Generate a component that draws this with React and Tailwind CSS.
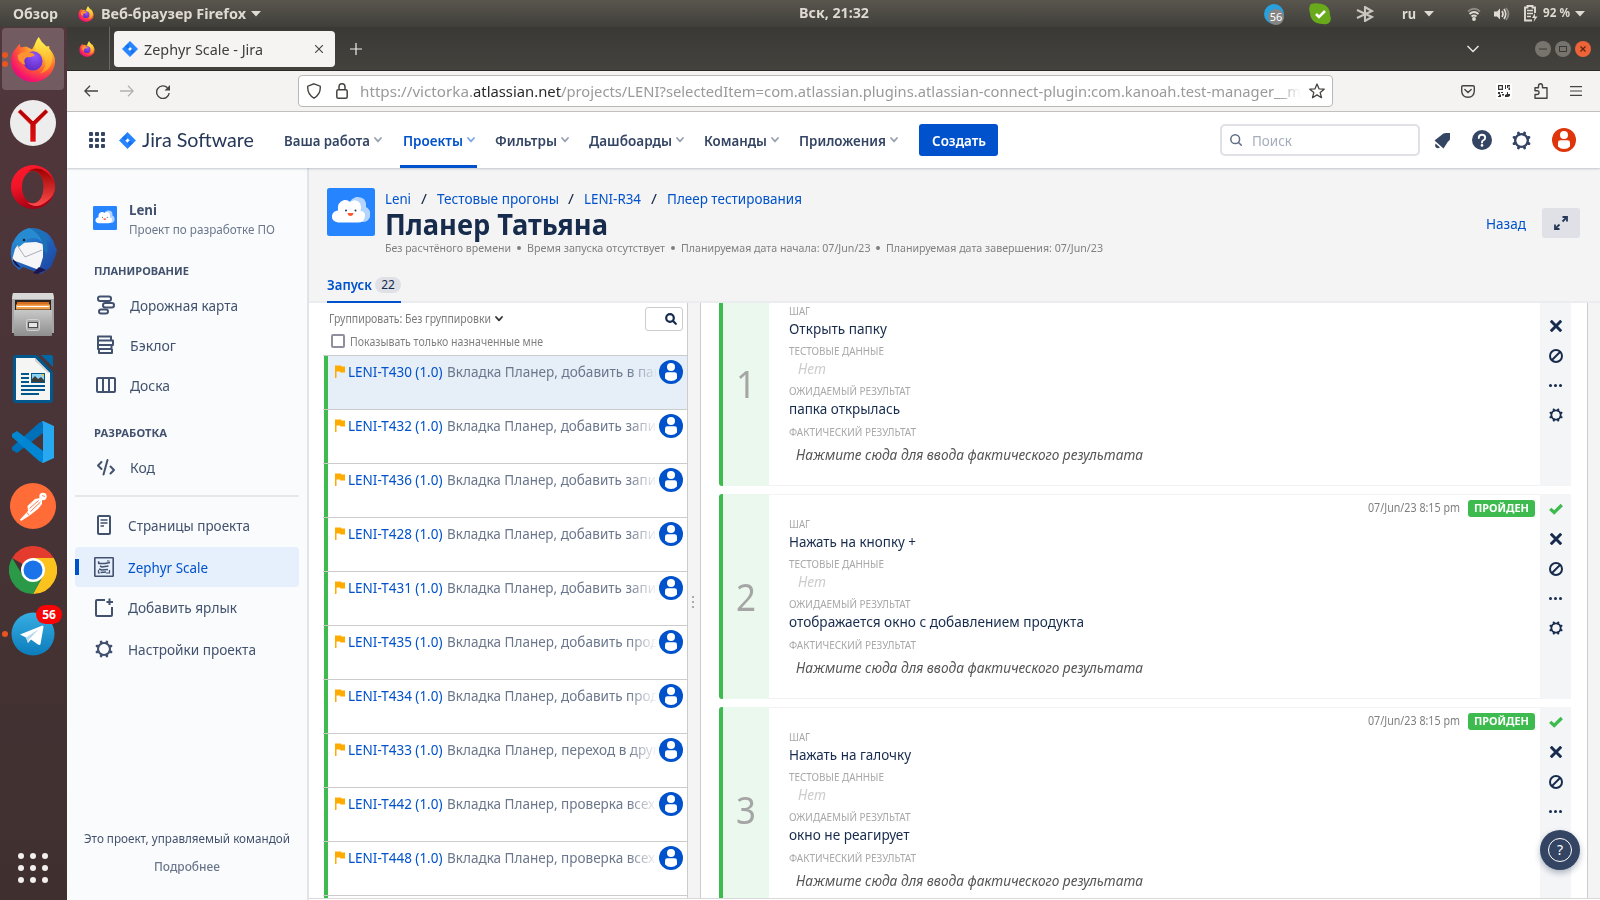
import { useLayoutEffect, useRef } from "react";

// Single line of text condensed or widened to the given width.
function T({ w, className = "", children }) {
  const ref = useRef(null);
  useLayoutEffect(() => {
    const el = ref.current;
    el.style.transform = "none";
    const range = document.createRange();
    range.selectNodeContents(el);
    const natural = range.getBoundingClientRect().width;
    el.style.transform = `scaleX(${w / natural})`;
  }, [w]);
  return (
    <span ref={ref} className={"inline-block shrink-0 origin-left whitespace-nowrap " + className} style={{ width: w }}>
      {children}
    </span>
  );
}

function Firefox({ className }) {
  return (
    <svg viewBox="0 0 48 48" className={className}>
      <defs>
        <radialGradient id="ffb" cx="0.75" cy="0.15" r="1">
          <stop offset="0" stopColor="#fff44f" />
          <stop offset="0.3" stopColor="#ffb32c" />
          <stop offset="0.6" stopColor="#ff5a36" />
          <stop offset="0.85" stopColor="#f5156c" />
          <stop offset="1" stopColor="#d80a86" />
        </radialGradient>
        <radialGradient id="ffp" cx="0.6" cy="0.25" r="0.8">
          <stop offset="0" stopColor="#9059ff" />
          <stop offset="0.6" stopColor="#7339d6" />
          <stop offset="1" stopColor="#592acb" />
        </radialGradient>
        <linearGradient id="ffy" x1="0" y1="0" x2="0" y2="1">
          <stop offset="0" stopColor="#fff44f" />
          <stop offset="1" stopColor="#ff9a1f" />
        </linearGradient>
      </defs>
      <path d="M6 13 L10 8 L11 12 L17 11 L23 14 L30 1 Q33 7 38 11 Q42 9 41 13 Q47 20 47 26 A23 22 0 0 1 1 26 Q1 18 6 13Z" fill="url(#ffb)" />
      <path d="M30 1 Q24 8 27 15 Q37 18 37 29 Q36 36 31 39 Q44 36 44 23 Q43 14 36 10 Q31 6 30 1Z" fill="url(#ffy)" opacity="0.9" />
      <circle cx="24" cy="26" r="10" fill="url(#ffp)" />
      <path d="M8 20 Q15 14 24 18 L26 20 Q22 23 18 22 Q13 24 16 30 Q8 28 8 20Z" fill="#ff9232" />
    </svg>
  );
}

function Yandex() {
  return (
    <svg viewBox="0 0 46 46" className="size-[46px]">
      <defs><linearGradient id="yr" x1="0" y1="0" x2="0" y2="1"><stop offset="0" stopColor="#b30000" /><stop offset="1" stopColor="#e01010" /></linearGradient></defs>
      <circle cx="23" cy="23" r="23" fill="#eeeded" />
      <path d="M7.500 12L20 24.500V42H26V24.500L38.500 12L35.500 9L23 21L10.500 9Z" fill="url(#yr)" stroke="#fff" strokeWidth="0.6" />
    </svg>
  );
}

function Opera() {
  return (
    <svg viewBox="0 0 44 44" className="size-11">
      <defs>
        <linearGradient id="opa" x1="0" y1="0" x2="0.3" y2="1"><stop offset="0" stopColor="#ff1b2d" /><stop offset="0.5" stopColor="#f01428" /><stop offset="1" stopColor="#a70014" /></linearGradient>
        <linearGradient id="opb" x1="0" y1="0" x2="0" y2="1"><stop offset="0" stopColor="#9c0000" /><stop offset="1" stopColor="#ff4b4b" /></linearGradient>
      </defs>
      <path fillRule="evenodd" d="M22 0A22 22 0 1 0 22 44A22 22 0 1 0 22 0ZM22 6C28 6 33 13 33 22S28 38 22 38S11 31 11 22S16 6 22 6Z" fill="url(#opa)" />
      <path d="M16 7Q22 2 30 4Q44 11 44 22T30 40Q22 43 16 37Q25 41 30 33Q35 22 30 11Q25 3 16 7Z" fill="url(#opb)" />
    </svg>
  );
}

function Thunderbird() {
  return (
    <svg viewBox="0 0 48 48" className="size-12">
      <defs><linearGradient id="tbb" x1="0" y1="0" x2="1" y2="1"><stop offset="0" stopColor="#2b9ae0" /><stop offset="0.5" stopColor="#2265bd" /><stop offset="1" stopColor="#1b3f9c" /></linearGradient></defs>
      <path d="M3 17Q0 30 4 37L10 43L14 40L32 47L42 40L46 30L48 23L46 19Q43 7 32 3Q27 0 18 2Q9 4 3 17Z" fill="url(#tbb)" />
      <path d="M10 16L27 15L34 17V30L30 43L9 35L3 33L6 22Z" fill="#f6f6f8" />
      <path d="M8 18L16 30L33 23" fill="none" stroke="#a9adb8" strokeWidth="1" />
      <path d="M6 15Q10 3 20 1Q35 4 36 18L29 12Q20 9 15 16L10 20Z" fill="#278bd2" />
      <path d="M20 1Q37 2 42 16L38 13Q39 20 38 27L34 22Q34 8 20 1Z" fill="#1d70b8" />
      <circle cx="15" cy="13" r="1.300" fill="#17202e" />
      <path d="M3 31Q5 39 12 41L7 35ZM30 40L37 43L28 47L24 46Z" fill="#1d1550" />
    </svg>
  );
}

function Files() {
  return (
    <svg viewBox="0 0 42 44" className="h-11 w-[42px]">
      <defs><linearGradient id="fl" x1="0" y1="0" x2="0" y2="1"><stop offset="0" stopColor="#c8c8c8" /><stop offset="1" stopColor="#8e8e8e" /></linearGradient></defs>
      <path d="M1 0H41L42 4V40H0V4Z" fill="#a5a5a5" />
      <path d="M1 0H41L42 6H0Z" fill="#d8d8d8" />
      <rect x="3" y="7" width="36" height="12" fill="#2a2220" />
      <rect x="5" y="9" width="32" height="3" fill="#d86f1f" />
      <rect x="4" y="11.500" width="34" height="5" fill="#f0a24f" />
      <rect x="5" y="13" width="32" height="1" fill="#fff" />
      <rect x="2" y="17" width="38" height="26" rx="1" fill="url(#fl)" />
      <rect x="14.500" y="26.500" width="13" height="11" rx="2" fill="#ababab" stroke="#d2d2d2" />
      <rect x="16.500" y="29.500" width="9" height="5" fill="#e6e6e6" stroke="#4c4c4c" />
    </svg>
  );
}

function Writer() {
  return (
    <svg viewBox="0 0 40 48" className="h-12 w-10">
      <path d="M3 0H24L40 17V45Q40 48 37 48H3Q0 48 0 45V3Q0 0 3 0Z" fill="#02588c" />
      <path d="M28 0H38Q40 0 40 2V12Z" fill="#0168a5" />
      <path d="M3 3H22L37 18V45H3Z" fill="#f5f5f4" />
      <path d="M22 3L37 18L35 18L22 6Z" fill="#d2d2d2" />
      <path d="M8 19H16M8 23H16M8 27H16M8 31H32M8 35H32M8 39H26" stroke="#02588c" strokeWidth="2" />
      <rect x="18.500" y="18.500" width="13" height="9" fill="#8cd2f5" stroke="#02588c" />
      <path d="M19 27V24L22 21L25 24L28 22L31 25V27Z" fill="#3c3c38" />
      <path d="M28 19H31V22Z" fill="#f0c830" />
    </svg>
  );
}

function VSCode() {
  return (
    <svg viewBox="0 0 42 42" className="size-[42px]">
      <path d="M31 0V12L5 32L0 29V26L27 2Z" fill="#0070b8" />
      <path d="M5 10L0 13V16L27 40L31 42V30Z" fill="#0086d2" />
      <path d="M31 0L42 5V37L31 42L30 41Q31 41 31 39V3Q31 1 30 1Z" fill="#28a8f0" />
    </svg>
  );
}

function Postman() {
  return (
    <svg viewBox="0 0 46 46" className="size-[46px]">
      <circle cx="23" cy="23" r="23" fill="#ff6c37" />
      <circle cx="33" cy="13.500" r="3.700" fill="#fff" />
      <path d="M30 15L25 16L17.500 23L18 28L10 36.500L11 38L19 33L28 26L32 21L32 17Z" fill="#fff" />
      <path d="M28.500 17.500L19.500 25.500M30.500 19L20.500 28.500M17 29.500L19 32.500" stroke="#ff6c37" strokeWidth="0.9" />
      <path d="M32 12.500L35 13.500" stroke="#ff6c37" strokeWidth="0.8" />
    </svg>
  );
}

function Chrome() {
  return (
    <svg viewBox="0 0 48 48" className="size-12">
      <path d="M24 24L3.200 12A24 24 0 0 1 44.800 12Z" fill="#e33b2e" />
      <path d="M24 12H44.800A24 24 0 0 1 24 48L34 30Z" fill="#fcc31e" />
      <path d="M24 48A24 24 0 0 1 3.200 12L14 30L24 36L34 30Z" fill="#2a9a48" />
      <circle cx="24" cy="24" r="12" fill="#fff" />
      <circle cx="24" cy="24" r="9.500" fill="#1a73e8" />
    </svg>
  );
}

function Telegram() {
  return (
    <svg viewBox="0 0 44 44" className="size-11">
      <defs><linearGradient id="tg" x1="0" y1="0" x2="0" y2="1"><stop offset="0" stopColor="#37aee2" /><stop offset="1" stopColor="#0c7cbc" /></linearGradient></defs>
      <circle cx="22" cy="22" r="21.500" fill="url(#tg)" />
      <path d="M9 22.500L31.500 13.500Q32.500 13.500 32.500 15L29.500 32Q29 33.500 27 32.500L20 27.500L17 31L15 25.500Z" fill="#fff" />
      <path d="M15 25.500L28 17L18 27.500L17 31Z" fill="#b8d9ee" />
    </svg>
  );
}

function Tri() {
  return <svg viewBox="0 0 10 6" className="h-[6px] w-[10px] shrink-0"><path d="M0 0H10L5 5.500Z" fill="#dfdbd2" /></svg>;
}

function JiraMark({ className }) {
  return (
    <svg viewBox="0 0 24 24" className={className}>
      <path fillRule="evenodd" d="M12 0.500L23.500 12L12 23.500L0.500 12ZM12 8.500L8.500 12L12 15.500L15.500 12Z" fill="#2684ff" strokeLinejoin="round" stroke="#2684ff" strokeWidth="0.800" />
      <path d="M12 3Q8 7 12 9L9 12L4 8ZM12 21Q16 17 12 15L15 12L20 16Z" fill="#0b65e3" opacity="0.550" />
    </svg>
  );
}

function Gear({ className, sw = 2.8 }) {
  return (
    <svg viewBox="0 0 24 24" className={className} fill="none" stroke="currentColor">
      <circle cx="12" cy="12" r="8" strokeWidth={sw} />
      {[22.5, 67.5, 112.5, 157.5, 202.5, 247.5, 292.5, 337.5].map((a) => (
        <path key={a} d="M12 1.800V3.500" strokeWidth="3.600" strokeLinecap="round" transform={`rotate(${a} 12 12)`} />
      ))}
    </svg>
  );
}

function Cloud({ className }) {
  return (
    <svg viewBox="0 0 48 48" className={className}>
      <rect width="48" height="48" rx="2.500" fill="#2684ff" />
      <path d="M20 34Q16 28 22 22Q20 12 29 9Q40 8 39 19Q44 21 43 29Q41 34 36 34Z" fill="#b3d4ff" />
      <path d="M11 34.500Q4 33 5 27.500Q6 23 11 22.500Q10 14 17 12Q21 11.500 23 14Q29 10 33 15Q35 19 33.500 23Q38.500 23 38 28.500Q37 34.500 31 34.500Z" fill="#fff" />
      <circle cx="19" cy="22.500" r="1" fill="#253858" /><circle cx="28.500" cy="22.500" r="1" fill="#253858" />
      <path d="M20.500 25H26.500Q26 28 23.500 28T20.500 25Z" fill="#ff5630" />
    </svg>
  );
}

function Person({ className }) {
  return (
    <svg viewBox="0 0 24 24" className={className}>
      <circle cx="12" cy="12" r="12" fill="currentColor" />
      <circle cx="12" cy="7" r="4" fill="#fff" />
      <path d="M6 14.500Q6 12.300 8.500 12.300H15.500Q18 12.300 18 14.500V18.500Q15.500 21 12 21T6 18.500Z" fill="#fff" />
    </svg>
  );
}

function Chev({ className }) {
  return <svg viewBox="0 0 8 6" className={"h-[6px] w-[8px] shrink-0 " + className} fill="none" stroke="currentColor" strokeWidth="1.800" strokeLinecap="round" strokeLinejoin="round"><path d="M1 1L4 4.300L7 1" /></svg>;
}

function TopBar() {
  return (
    <div className="flex h-[27px] items-center bg-gradient-to-b from-[#59564e] to-[#403f3a] pl-[13px] text-[15px] font-bold text-[#dfdbd2]">
      <T w={45} className="mt-px text-[14px]">Обзор</T>
      <Firefox className="ml-[20px] size-[16px]" />
      <T w={145} className="mt-px ml-[7px] text-[14px]">Веб-браузер Firefox</T>
      <span className="ml-[5px]"><Tri /></span>
      <T w={70} className="ml-[538px] text-[14px]">Вск, 21:32</T>
      <div className="relative ml-[395px] size-[20px] shrink-0 rounded-full bg-[#27a0dd]">
        <span className="absolute top-[5px] left-[4px] flex size-4 items-center justify-center rounded-full bg-[#858585] text-[11px] leading-none font-normal text-white">56</span>
      </div>
      <svg viewBox="0 0 22 22" className="ml-[25px] size-[22px] shrink-0"><path d="M2 1Q5 0 9 .500Q21 1 21 12Q23 17 20 20Q17 22 14 21Q2 21 1 10Q-1 4 2 1Z" fill="#69aa1c" /><path d="M7 11L10 14L16 8" fill="none" stroke="#fff" strokeWidth="2.600" /></svg>
      <svg viewBox="0 0 18 16" className="ml-[25px] h-4 w-[18px] shrink-0" fill="none" stroke="#c9c6bf" strokeWidth="2.100"><path d="M1 4L16 11L9 15V1L16 5L1 12" /></svg>
      <T w={14} className="ml-[28px] mt-px text-[14px]">ru</T>
      <span className="ml-[8px]"><Tri /></span>
      <svg viewBox="0 0 14 14" className="ml-[33px] size-[14px] shrink-0" fill="none" stroke="#dfdbd2" strokeWidth="1.800"><path d="M1 4.500Q7 -1 13 4.500" stroke="#8d8a83" /><path d="M2.500 7Q7 3 11.500 7M4.500 9.500Q7 7.500 9.500 9.500" /><circle cx="7" cy="12" r="1" fill="#dfdbd2" /></svg>
      <svg viewBox="0 0 16 14" className="ml-[13px] h-[14px] w-4 shrink-0" fill="none" stroke="#dfdbd2" strokeWidth="1.700"><path d="M0 4.500H3L6 1.500V12.500L3 9.500H0Z" fill="#dfdbd2" stroke="none" /><path d="M8 4Q10 7 8 10M10 2Q13.500 7 10 12" /><path d="M12 1Q17 7 12 13" stroke="#8d8a83" /></svg>
      <svg viewBox="0 0 14 17" className="ml-[14px] h-[17px] w-[14px] shrink-0" fill="none" stroke="#dfdbd2" strokeWidth="1.900"><path d="M8 15.500H1V2.500H3.500V1H8.500V2.500H11V8" /><path d="M3 5.500H9M3 8.500H9M3 11.500H7" strokeWidth="1.400" /><path d="M11 8L8 13H10.500L9.500 17L13.500 11.500H11Z" fill="#dfdbd2" stroke="none" /></svg>
      <T w={27} className="ml-[5px] text-[12.5px]">92 %</T>
      <span className="ml-[5px]"><Tri /></span>
    </div>
  );
}

function Dock() {
  const cell = "flex h-[63.9px] shrink-0 items-center justify-center";
  return (
    <div className="flex w-[67px] shrink-0 flex-col bg-gradient-to-b from-[#51373d] to-[#3f302f]">
      <div className="relative mt-[1px] ml-[2px] flex h-[62px] w-[62px] shrink-0 items-center justify-center rounded-[4px] bg-[#735c61]">
        <Firefox className="size-[46px]" />
        <span className="absolute top-[24px] left-0 size-[6px] rounded-full bg-[#e95420]" />
        <span className="absolute top-[33px] left-0 size-[6px] rounded-full bg-[#e95420]" />
      </div>
      <div className="mt-px flex w-[66px] flex-col">
        <div className={cell}><Yandex /></div>
        <div className={cell}><Opera /></div>
        <div className={cell}><Thunderbird /></div>
        <div className={cell}><Files /></div>
        <div className={cell}><Writer /></div>
        <div className={cell}><VSCode /></div>
        <div className={cell}><Postman /></div>
        <div className={cell}><Chrome /></div>
        <div className={cell + " relative"}>
          <Telegram />
          <span className="absolute top-[29px] left-[2px] size-[6px] rounded-full bg-[#e95420]" />
          <span className="absolute top-[3px] left-[36px] flex h-[19px] w-[26px] items-center justify-center rounded-full bg-[#f80505] text-[12px] font-bold text-white">56</span>
        </div>
      </div>
      <div className="mt-[187px] ml-[18px] grid w-[30px] grid-cols-3 gap-[6px]">
        {[0, 1, 2, 3, 4, 5, 6, 7, 8].map((i) => <span key={i} className="size-[6px] rounded-full bg-[#f2f0ee]" />)}
      </div>
    </div>
  );
}

function Browser() {
  return (
    <>
      <div className="flex h-[44px] shrink-0 items-center border-b border-[#2c2a27] bg-gradient-to-b from-[#3a3935] to-[#44423d]">
        <Firefox className="ml-[12px] size-[16px]" />
        <div className="ml-[14px] h-full w-px bg-[#6b6964]" />
        <div className="ml-[4px] flex h-[36px] w-[221px] items-center rounded-[4px] bg-[#f5f4f2] pl-[8px] text-[#3d3d3d]">
          <JiraMark className="size-4" />
          <T w={119} className="mt-px ml-[6px] text-[14.5px]">Zephyr Scale - Jira</T>
          <svg viewBox="0 0 8 8" className="ml-[52px] size-2" stroke="#444" strokeWidth="1.100"><path d="M0 0L8 8M8 0L0 8" /></svg>
        </div>
        <svg viewBox="0 0 12 12" className="ml-[15px] size-3" stroke="#eee" strokeWidth="1.200"><path d="M6 0V12M0 6H12" /></svg>
        <svg viewBox="0 0 12 8" className="ml-[1105px] h-2 w-3" fill="none" stroke="#e8e6e2" strokeWidth="1.500"><path d="M0.500 1L6 6.500L11.500 1" /></svg>
        <div className="ml-[56px] flex gap-1">
          <svg viewBox="0 0 16 16" className="size-4"><circle cx="8" cy="8" r="8" fill="#76746d" /><path d="M4 8H12" stroke="#3a3935" /></svg>
          <svg viewBox="0 0 16 16" className="size-4"><circle cx="8" cy="8" r="8" fill="#76746d" /><rect x="4.500" y="5.500" width="7" height="5" fill="none" stroke="#3a3935" /></svg>
          <svg viewBox="0 0 16 16" className="size-4"><circle cx="8" cy="8" r="8" fill="#ee6337" /><path d="M5.500 5.500L10.500 10.500M10.500 5.500L5.500 10.500" stroke="#5c2412" strokeWidth="1.200" /></svg>
        </div>
      </div>
      <div className="flex h-[41px] shrink-0 items-center border-b border-[#c4c2c0] bg-[#f4f3f2] text-[#45433f]">
        <svg viewBox="0 0 14 12" className="ml-[17px] h-3 w-[14px]" fill="none" stroke="currentColor" strokeWidth="1.300"><path d="M14 6H1M6 0.800L0.800 6L6 11.200" /></svg>
        <svg viewBox="0 0 14 12" className="ml-[22px] h-3 w-[14px]" fill="none" stroke="#b3b1ae" strokeWidth="1.300"><path d="M0 6H13M8 0.800L13.200 6L8 11.200" /></svg>
        <svg viewBox="0 0 14 14" className="ml-[22px] mt-px size-[14px]" fill="none" stroke="currentColor" strokeWidth="1.400"><path d="M13.200 8A6.300 6.300 0 1 1 11.500 2.800" /><path d="M14 0V5.500H8.500Z" fill="currentColor" stroke="none" /></svg>
        <div className="ml-[128px] flex h-[32px] w-[1035px] items-center rounded-[4px] border border-[#bab8b6] bg-white pl-[8px]">
          <svg viewBox="0 0 14 16" className="h-4 w-[14px]" fill="none" stroke="currentColor" strokeWidth="1.400"><path d="M7 0.800L13.200 3.200Q14 11 7 15.200Q0 11 0.800 3.200Z" /></svg>
          <svg viewBox="0 0 12 16" className="ml-[15px] h-4 w-3" fill="none" stroke="currentColor" strokeWidth="1.500"><rect x="0.800" y="6.800" width="10.400" height="8.400" rx="1.500" /><path d="M3 6.500V4Q3 0.800 6 0.800T9 4V6.500" /></svg>
          <div className="mt-px ml-[12px] flex h-[26px] w-[941px] items-center overflow-hidden text-[14.5px] text-[#9a9a9a] [mask-image:linear-gradient(to_right,black_920px,transparent)]">
            <T w={113}>https://victorka.</T><T w={88} className="text-[#2a2a2a]">atlassian.net</T><T w={740}>/projects/LENI?selectedItem=com.atlassian.plugins.atlassian-connect-plugin:com.kanoah.test-manager__m</T>
          </div>
          <svg viewBox="0 0 16 16" className="ml-[8px] size-4" fill="none" stroke="currentColor" strokeWidth="1.300" strokeLinejoin="round"><path d="M8 1L10 5.800L15.200 6.200L11.200 9.600L12.500 14.700L8 11.900L3.500 14.700L4.800 9.600L0.800 6.200L6 5.800Z" /></svg>
        </div>
        <svg viewBox="0 0 14 13" className="ml-[128px] h-[13px] w-[14px]" fill="none" stroke="currentColor" strokeWidth="1.400"><path d="M0.700 2Q0.700 0.700 2 0.700H12Q13.300 0.700 13.300 2V6Q13 12.300 7 12.300T0.700 6Z" /><path d="M3.800 4.500L7 7.500L10.200 4.500" strokeLinecap="round" /></svg>
        <svg viewBox="0 0 16 16" className="ml-[21px] size-4" fill="#333"><rect width="16" height="16" rx="1" fill="#fff" /><path fillRule="evenodd" d="M2 2H7V7H2ZM3.200 3.200V5.800H5.800V3.200ZM9 2H10V6H9ZM11 2H14V3.500H12V5H11ZM12.500 4.500H14V7H12.500ZM2 9H4V11H2ZM5 9H7V10H5ZM3 11.500H5V14H3ZM6 11H8V12.500H6ZM2 13H3V14H2ZM11 9H12V11H14V13L12 14H9V12L11 11Z" /></svg>
        <svg viewBox="0 0 14 16" className="ml-[22px] h-4 w-[14px]" fill="none" stroke="currentColor" strokeWidth="1.400" strokeLinejoin="round"><path d="M1 6V4.800H4.500V3Q4.500 0.800 6.500 0.800T8.500 3V4.800H13V15.200H1V11.500H3Q5 11.500 5 9.500T3 7.800H1Z" /></svg>
        <svg viewBox="0 0 12 10" className="ml-[22px] h-[10px] w-3" stroke="currentColor" strokeWidth="1.200"><path d="M0 0.600H12M0 5H12M0 9.400H12" /></svg>
      </div>
    </>
  );
}

const NAV = [
  ["Ваша работа", 86, 21], ["Проекты", 60, 20], ["Фильтры", 62, 20], ["Дашбоарды", 83, 20], ["Команды", 63, 20], ["Приложения", 87, 0],
];

function JiraHeader() {
  return (
    <div className="relative z-10 flex h-[56px] shrink-0 items-center bg-white text-[#344563] shadow-[0_1px_2px_rgba(9,30,66,0.22)]">
      <div className="ml-[22px] grid grid-cols-3 gap-[2px]">
        {[0, 1, 2, 3, 4, 5, 6, 7, 8].map((i) => <span key={i} className="size-[4px] rounded-[1px] bg-[#344563]" />)}
      </div>
      <JiraMark className="ml-[14px] size-[17px]" />
      <T w={112} className="-mt-[3px] ml-[6px] font-['Lato',sans-serif] text-[20px] text-[#253858]">Jira Software</T>
      <div className="ml-[30px] flex h-full items-center text-[14px] font-medium">
        {NAV.map(([label, w, gap], i) => (
          <div key={label} className={i === 1 ? "relative flex h-full items-center text-[#0052cc]" : "flex h-full items-center"}>
            <T w={w} className="mt-[2px] font-semibold">{label}</T>
            <Chev className="ml-[4px] opacity-50" />
            {i === 1 && <span className="absolute bottom-0 -left-[3px] h-[3px] w-[77px] bg-[#0052cc]" />}
            <span className="shrink-0" style={{ width: gap }} />
          </div>
        ))}
      </div>
      <div className="ml-[21px] flex h-8 w-[79px] items-center justify-center rounded-[3px] bg-[#0052cc] text-[14px] font-semibold text-white"><T w={54} className="mt-[2px]">Создать</T></div>
      <div className="ml-[222px] flex h-8 w-[200px] items-center rounded-[5px] border-2 border-[#dfe1e6] pl-[8px] text-[14px] text-[#a5adba]">
        <svg viewBox="0 0 12 12" className="size-3" fill="none" stroke="#5e6c84" strokeWidth="1.500" strokeLinecap="round"><circle cx="5.200" cy="5.200" r="4.400" /><path d="M8.500 8.500L11.300 11.300" /></svg>
        <T w={40} className="mt-[2px] ml-[10px]">Поиск</T>
      </div>
      <svg viewBox="0 0 17 17" className="ml-[14px] size-[17px] shrink-0" fill="#344563"><path d="M0.500 8.500L7.500 3Q9 1 12 1H16V5Q16.500 8 14 9.500L9.500 16.500Z" /><path d="M1.500 11.500L6 15.500Q3.500 17 2 15.500T1.500 11.500Z" /></svg>
      <svg viewBox="0 0 20 20" className="ml-[21px] size-5 shrink-0"><circle cx="10" cy="10" r="10" fill="#344563" /><path d="M6.800 8Q6.800 4.800 10 4.800T13.200 7.800Q13.200 9.500 11 10.500Q10 11 10 12.500" fill="none" stroke="#fff" strokeWidth="1.900" strokeLinecap="round" /><circle cx="10" cy="15.400" r="1.300" fill="#fff" /></svg>
      <Gear className="ml-[20px] size-[19px] shrink-0" sw={3} />
      <Person className="ml-[21px] size-6 shrink-0 text-[#de350b]" />
    </div>
  );
}

const ic = "size-[20px] shrink-0";
const line = { fill: "none", stroke: "currentColor", strokeWidth: 2 };
const IconRoad = () => <svg viewBox="0 0 20 20" className={ic} {...line}><rect x="2" y="1.500" width="13" height="4.500" rx="2" /><rect x="7" y="8" width="11" height="4.500" rx="2.200" /><rect x="3" y="14.500" width="9" height="4" rx="2" /></svg>;
const IconBacklog = () => <svg viewBox="0 0 20 20" className={ic} {...line}><path d="M2 1.500H15V5.500H2ZM4 5.500H17V10H2V5.500M2 10H15.500V14H2ZM3 14V18H16V14" strokeLinejoin="round" /></svg>;
const IconBoard = () => <svg viewBox="0 0 20 20" className={ic} {...line}><rect x="1" y="3" width="18" height="14" rx="1" /><path d="M7 3V17M13 3V17" /></svg>;
const IconCode = () => <svg viewBox="0 0 20 20" className={ic} {...line} strokeLinecap="round" strokeLinejoin="round"><path d="M5.500 4L2 7.500L5.500 11M11.500 2L7.500 16.500M14.500 8.500L18 12L14.500 15.500" /></svg>;
const IconPage = () => <svg viewBox="0 0 20 20" className={ic} {...line}><rect x="4" y="1" width="12" height="18" rx="1" /><path d="M6.500 5H13.500M6.500 8H13.500M6.500 11H10" strokeWidth="1.500" /></svg>;
const IconZephyr = () => <svg viewBox="0 0 20 20" className={ic} fill="none" stroke="currentColor"><rect x="0.800" y="0.800" width="18.400" height="18.400" rx="0.500" strokeWidth="1.600" /><path d="M4.500 4.500L5 6.500H11L16 5.500M6 9L8 10L14.500 9M5 12L7.500 13L14 12.500M6.500 15.500L12 15" strokeWidth="1.400" /><path d="M12 16H15.500V13M4.500 13V16H6M13 4H15.500M4.500 4.500V7" strokeWidth="1.200" /></svg>;
const IconAdd = () => <svg viewBox="0 0 20 20" className={ic} {...line}><path d="M11 2H3Q2 2 2 3V17Q2 18 3 18H17Q18 18 18 17V9" /><path d="M15.500 0.500V7M12.500 4H19" /></svg>;

function Side({ icon, label, w, h, shift }) {
  return (
    <div className={"flex shrink-0 items-center text-[14px] text-[#42526e] " + h}>
      {icon}
      <T w={w} className={shift}>{label}</T>
    </div>
  );
}

function Sidebar() {
  return (
    <div className="flex w-[242px] shrink-0 flex-col border-r-2 border-[#e2e3e7] bg-[#fafbfc] text-[#42526e]">
      <div className="mt-[27px] flex h-[44px] items-center pl-[26px]">
        <Cloud className="mt-[1px] size-6" />
        <div className="mt-[3px] ml-[12px] flex flex-col">
          <T w={28} className="h-[20px] text-[14px] leading-[20px] font-bold">Leni</T>
          <T w={146} className="h-[18px] text-[12.5px] leading-[19px] text-[#6b778c]">Проект по разработке ПО</T>
        </div>
      </div>
      <div className="mt-[22px] flex h-[20px] items-center pl-[27px] text-[11px] font-bold"><T w={95}>ПЛАНИРОВАНИЕ</T></div>
      <div className="mt-[4px] flex flex-col pl-[29px]">
        <Side icon={<IconRoad />} label="Дорожная карта" w={108} h="h-10" shift="mt-[2px] ml-[14px]" />
        <Side icon={<IconBacklog />} label="Бэклог" w={46} h="h-10" shift="mt-[2px] ml-[14px]" />
        <Side icon={<IconBoard />} label="Доска" w={40} h="h-10" shift="mt-[2px] ml-[14px]" />
      </div>
      <div className="mt-[18px] flex h-[20px] items-center pl-[27px] text-[11px] font-bold"><T w={73}>РАЗРАБОТКА</T></div>
      <div className="mt-[5px] pl-[29px]"><Side icon={<IconCode />} label="Код" w={25} h="h-10" shift="ml-[14px]" /></div>
      <div className="mt-[7px] ml-[8px] h-[2px] w-[224px] shrink-0 bg-[#e7e8eb]" />
      <div className="mt-[8px] flex flex-col pl-[27px]"><Side icon={<IconPage />} label="Страницы проекта" w={122} h="h-10" shift="mt-[2px] ml-[14px]" /></div>
      <div className="mt-[2px] ml-[8px] flex h-10 w-[224px] shrink-0 items-center rounded-[4px] bg-[#e6effc] text-[14px]">
        <span className="h-4 w-1 bg-[#0052cc]" />
        <span className="ml-[15px] flex"><IconZephyr /></span>
        <T w={80} className="mt-[2px] ml-[14px] text-[#0052cc]">Zephyr Scale</T>
      </div>
      <div className="mt-px flex flex-col pl-[27px]">
        <Side icon={<IconAdd />} label="Добавить ярлык" w={109} h="h-10" shift="ml-[14px]" />
        <div className="h-[2px]" />
        <Side icon={<Gear className="-mt-[2px] size-5 p-px" />} label="Настройки проекта" w={128} h="h-10" shift="ml-[14px]" />
      </div>
      <div className="mt-[159px] flex h-5 items-center pl-[17px] text-[12.5px]"><T w={206}>Это проект, управляемый командой</T></div>
      <div className="mt-[8px] flex h-5 items-center pl-[87px] text-[12.5px] font-medium text-[#6b778c]"><T w={66}>Подробнее</T></div>
    </div>
  );
}

const Slash = () => <T w={6} className="mx-[9.75px] text-[#172b4d]">/</T>;
const Dot = ({ className = "" }) => <span className={"size-[4px] shrink-0 rounded-full bg-[#7f7f7f] " + className} />;

function PageHead() {
  return (
    <div className="flex h-[135px] shrink-0 flex-col justify-between border-b-2 border-[#ebecf0] bg-[#f4f4f4]">
      <div className="flex pt-[20px]">
        <Cloud className="ml-[18px] size-12 shrink-0" />
        <div className="ml-[10px] w-[1101px] shrink-0">
          <div className="flex h-[22px] items-center text-[14px] text-[#0052cc]">
            <T w={26}>Leni</T><Slash /><T w={122}>Тестовые прогоны</T><Slash /><T w={57}>LENI-R34</T><Slash /><T w={135}>Плеер тестирования</T>
          </div>
          <div className="flex h-[28px] items-center text-[28px] leading-none font-bold text-[#172b4d]"><T w={223}>Планер Татьяна</T></div>
          <div className="flex h-[20px] items-center text-[11.5px] leading-none text-[#7f7f7f]">
            <T w={126}>Без расчтёного времени</T><Dot className="mx-[6px]" />
            <T w={138}>Время запуска отсутствует</T><Dot className="mx-[6px]" />
            <T w={189.5}>Планируемая дата начала: 07/Jun/23</T><Dot className="mx-[5.7px]" />
            <T w={217}>Планируемая дата завершения: 07/Jun/23</T>
          </div>
        </div>
        <div className="mt-[20px] flex h-[30px] items-center text-[14px] text-[#0052cc]">
          <T w={40} className="mt-[2px]">Назад</T>
          <div className="ml-[16px] flex h-[30px] w-[38px] items-center justify-center rounded-[3px] bg-[#dfe1e6]">
            <svg viewBox="0 0 14 14" className="size-[14px]" fill="none" stroke="#253858" strokeWidth="1.800"><path d="M8.500 5.500L12 2M1.800 12.200L5.500 8.500" /><path d="M8.500 1H13V5.500M1 8.500V13H5.500" /></svg>
          </div>
        </div>
      </div>
      <div className="-mb-[2px] ml-[18px] flex h-[36px] w-[74px] items-center border-b-2 border-[#0052cc] text-[14px] font-semibold text-[#0052cc]">
        <T w={45} className="mt-[2px]">Запуск</T>
        <span className="mt-px ml-[3px] flex h-4 w-[26px] items-center justify-center rounded-full bg-[#dfe1e6] text-[12px] font-normal text-[#172b4d]">22</span>
      </div>
    </div>
  );
}

const TESTS = [
  ["430", "добавить в папку", 229], ["432", "добавить запись", 223], ["436", "добавить запись", 223], ["428", "добавить запись", 223],
  ["431", "добавить запись", 223], ["435", "добавить продукт", 232], ["434", "добавить продукт", 232], ["433", "переход в другой", 228],
  ["442", "проверка всех", 208], ["448", "проверка всех", 208],
];

function TestList() {
  return (
    <div className="flex w-[379px] shrink-0 flex-col overflow-hidden border-r border-[#ccc] bg-white pl-[14px]">
      <div className="flex h-[28px] shrink-0 items-center pt-[4px] pl-[6px] text-[12px] text-[#7a7a7a]">
        <T w={162}>Группировать: Без группировки</T>
        <Chev className="ml-[4px] text-[#333]" />
        <div className="ml-[142px] flex h-6 w-[38px] shrink-0 items-center justify-end rounded-[3px] border border-[#ccc] pr-[5px]">
          <svg viewBox="0 0 12 12" className="size-3" fill="none" stroke="#172b4d" strokeWidth="2.200" strokeLinecap="round"><circle cx="5" cy="5" r="3.800" /><path d="M8 8L10.800 10.800" /></svg>
        </div>
      </div>
      <div className="flex h-[24px] shrink-0 items-center pb-[2px] pl-[8px] text-[12px] text-[#7f7f7f]">
        <span className="-mt-[2px] size-[14px] rounded-[2px] border-2 border-[#8f8f9d]" />
        <T w={193} className="ml-[5px]">Показывать только назначенные мне</T>
      </div>
      {TESTS.map(([n, t, w], i) => (
        <div key={n} className="flex h-[54px] shrink-0 border-t border-[#ccc]">
          <div className="ml-px w-1 bg-[#3dbb4e]" />
          <div className={"flex grow items-start pl-[7px] " + (i === 0 ? "bg-[#e6eef8]" : "")}>
            <svg viewBox="0 0 10 13" className="mt-[9px] h-[13px] w-[10px] shrink-0"><path d="M0 0.500H6L6.500 1.500H10V7.500H5.500L5 6.500H1.500V13H0Z" fill="#ffab00" /></svg>
            <div className="ml-[3px] flex h-8 w-[308px] items-center overflow-hidden text-[14px] text-[#6b778c] [mask-image:linear-gradient(to_right,black_280px,transparent_310px)]">
              <T w={94.5} className="text-[#0052cc]">{`LENI-T${n} (1.0)`}</T>
              <T w={w} className="ml-[4.500px]">{`Вкладка Планер, ${t}`}</T>
            </div>
            <Person className="mt-1 ml-[3px] size-6 shrink-0 text-[#0052cc]" />
          </div>
        </div>
      ))}
      <div className="flex h-[54px] shrink-0 border-t border-[#ccc]"><div className="ml-px w-1 bg-[#3dbb4e]" /></div>
    </div>
  );
}

const Label = ({ w, children }) => <div className="flex h-[14px] items-center text-[10px] text-[#a8a8a8]"><T w={w}>{children}</T></div>;

function Step({ n, step, sw, result, rw, stamp }) {
  return (
    <div className="mb-[8px] flex h-[205px] shrink-0 overflow-hidden rounded-l-[3px]">
      <div className="w-1 shrink-0 bg-[#3dbb4e]" />
      <div className="flex w-[46px] shrink-0 items-center justify-center bg-[#ebf8ee] text-[38px] text-[#a5a5a5]"><T w={20}>{n}</T></div>
      <div className="flex grow border-y border-[#f2f2f3]">
        <div className="grow pt-[22px] pl-[20px] text-[14px] text-[#172b4d]">
          <Label w={21}>ШАГ</Label>
          <div className="mt-[1px] flex h-[20px] items-center"><T w={sw}>{step}</T></div>
          <div className="mt-[5px]"><Label w={95}>ТЕСТОВЫЕ ДАННЫЕ</Label></div>
          <div className="mt-[1px] flex h-[20px] items-center pl-[9px] text-[#ccc] italic"><T w={28}>Нет</T></div>
          <div className="mt-[5px]"><Label w={121.5}>ОЖИДАЕМЫЙ РЕЗУЛЬТАТ</Label></div>
          <div className="mt-[1px] flex h-[20px] items-center"><T w={rw}>{result}</T></div>
          <div className="mt-[6px]"><Label w={127}>ФАКТИЧЕСКИЙ РЕЗУЛЬТАТ</Label></div>
          <div className="mt-[6px] flex h-[20px] items-center pl-[7px] text-[#555] italic"><T w={347}>Нажмите сюда для ввода фактического результата</T></div>
        </div>
        {stamp && (
          <div className="flex h-[26px] items-center pr-[5px] text-[12px] text-[#7f7f7f]">
            <T w={92}>{stamp}</T>
            <span className="ml-[8px] flex h-[17px] w-[67px] items-center justify-center rounded-[3px] bg-[#3dbb4e] text-[11px] font-bold text-white"><T w={55}>ПРОЙДЕН</T></span>
          </div>
        )}
      </div>
      <div className="flex w-[31px] shrink-0 flex-col items-center bg-[#f4f5f7] text-[#172b4d]">
        <div className="flex h-[29px] items-center"><svg viewBox="0 0 14 12" className="h-3 w-[14px]" fill="none" stroke="#3dbb4e" strokeWidth="3.200"><path d="M1.200 5.800L5.200 9.500L12.800 2" /></svg></div>
        <div className="flex h-[32px] items-center"><svg viewBox="0 0 12 12" className="size-3" stroke="currentColor" strokeWidth="3.600"><path d="M1.800 1.800L10.200 10.200M10.200 1.800L1.800 10.200" strokeLinecap="square" strokeWidth="3" /></svg></div>
        <div className="flex h-[28px] items-center"><svg viewBox="0 0 14 14" className="size-[14px]" fill="none" stroke="currentColor" strokeWidth="2"><circle cx="7" cy="7" r="6" /><path d="M11 3L3 11" /></svg></div>
        <div className="flex h-[30px] items-center gap-[2px]"><span className="size-[3px] rounded-full bg-[#172b4d]" /><span className="size-[3px] rounded-full bg-[#172b4d]" /><span className="size-[3px] rounded-full bg-[#172b4d]" /></div>
        <div className="flex h-[30px] items-center"><Gear className="size-[14px]" sw={3.2} /></div>
      </div>
    </div>
  );
}

function Panels() {
  return (
    <div className="flex h-[596px] shrink-0 overflow-hidden border-b border-[#d9d9d9] bg-[#f4f4f4]">
      <TestList />
      <div className="flex w-[12px] shrink-0 flex-col items-center gap-[3px] pt-[293px] pr-[2px]">
        <span className="size-[2px] bg-[#aaa]" /><span className="size-[2px] bg-[#aaa]" /><span className="size-[2px] bg-[#aaa]" />
      </div>
      <div className="w-[888px] shrink-0 overflow-hidden border-x border-[#ccc] bg-white pr-[16px] pl-[18px]">
        <div className="-mt-[22px] flex flex-col">
          <Step n="1" step="Открыть папку" sw={98} result="папка открылась" rw={111} />
          <Step n="2" step="Нажать на кнопку +" sw={127} result="отображается окно с добавлением продукта" rw={295} stamp="07/Jun/23 8:15 pm" />
          <Step n="3" step="Нажать на галочку" sw={122} result="окно не реагирует" rw={120.5} stamp="07/Jun/23 8:15 pm" />
        </div>
      </div>
    </div>
  );
}

export default function App() {
  return (
    <div className="relative flex h-[900px] w-[1600px] flex-col overflow-hidden bg-white font-['Noto_Sans','Open_Sans',sans-serif] leading-[1.3]">
      <TopBar />
      <div className="flex h-[873px] shrink-0">
        <Dock />
        <div className="flex w-[1533px] shrink-0 flex-col">
          <Browser />
          <JiraHeader />
          <div className="flex h-[732px] shrink-0">
            <Sidebar />
            <div className="flex w-[1291px] shrink-0 flex-col">
              <PageHead />
              <Panels />
            </div>
          </div>
        </div>
      </div>
      <div className="absolute top-[830px] left-[1540px] z-20 flex size-10 items-center justify-center rounded-full bg-[#344563] shadow-[0_3px_6px_rgba(9,30,66,0.3)]">
        <span className="flex size-6 items-center justify-center rounded-full border-[1.5px] border-white text-[14px] text-white">?</span>
      </div>
    </div>
  );
}
